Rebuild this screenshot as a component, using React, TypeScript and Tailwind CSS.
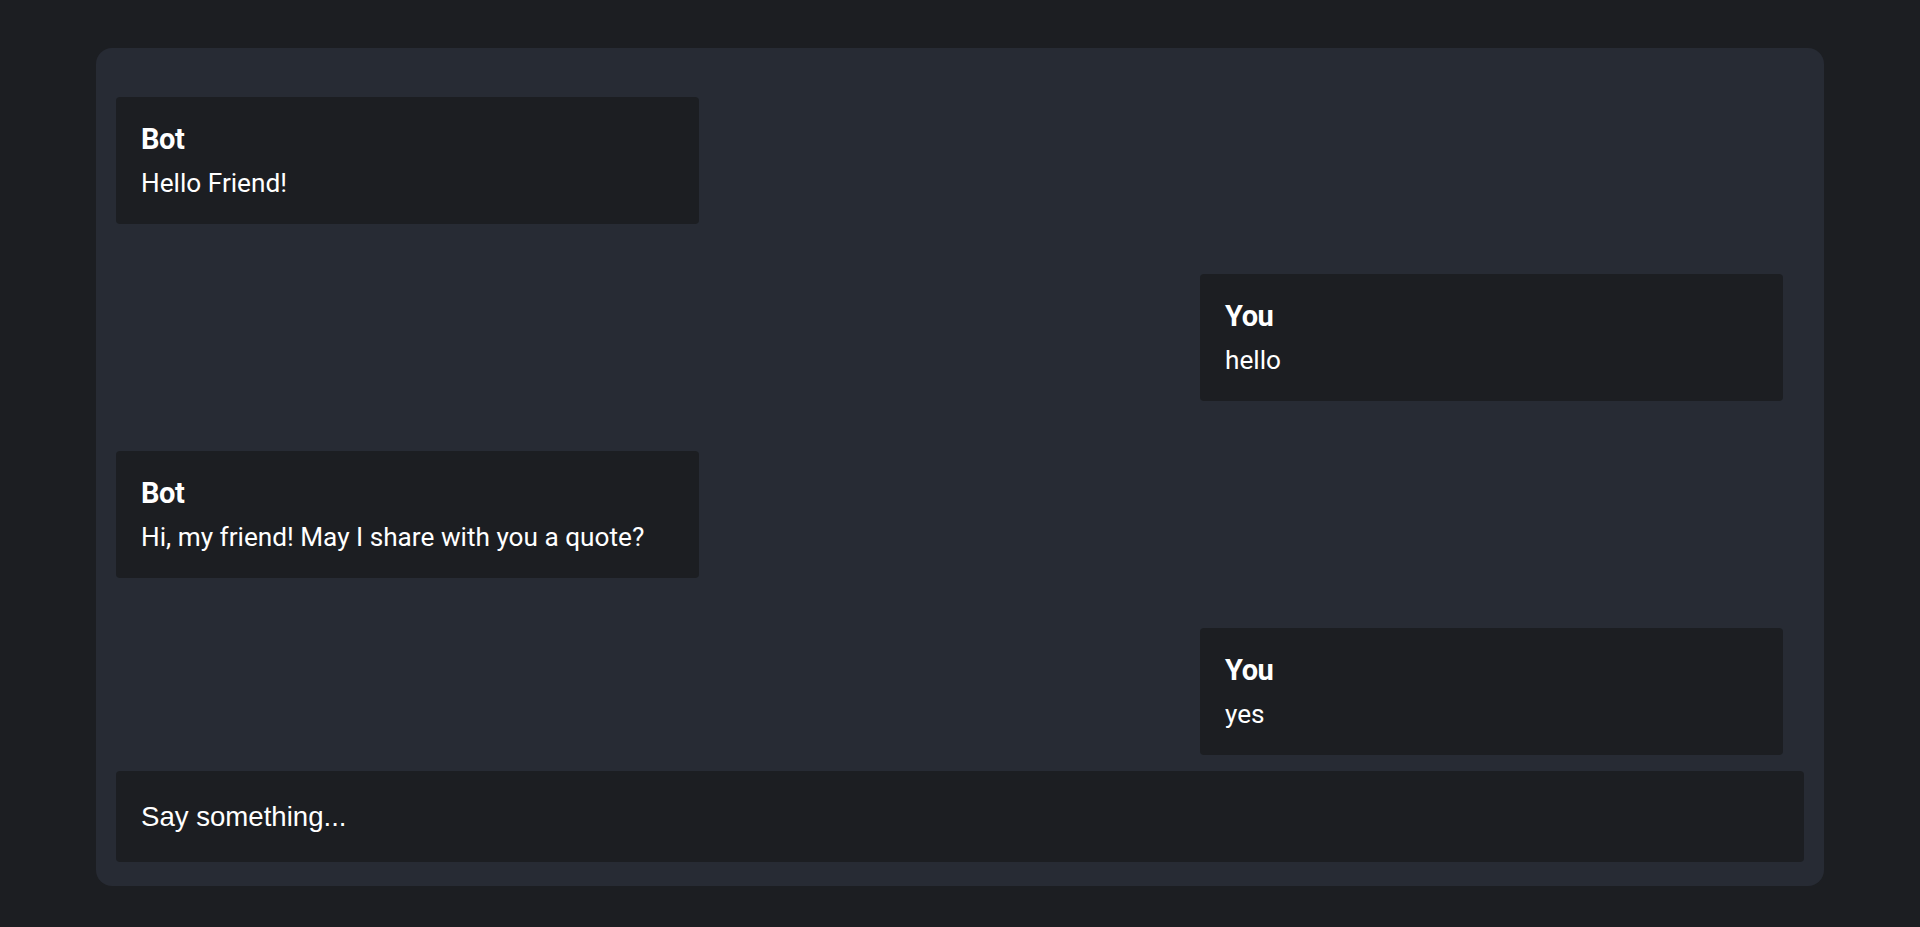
import React from 'react';

interface Message {
  id: number;
  author: 'Bot' | 'You';
  text: string;
}

const messages: Message[] = [
  { id: 1, author: 'Bot', text: 'Hello Friend!' },
  { id: 2, author: 'You', text: 'hello' },
  { id: 3, author: 'Bot', text: 'Hi, my friend! May I share with you a quote?' },
  { id: 4, author: 'You', text: 'yes' },
];

const MessageBubble: React.FC<{ message: Message }> = ({ message }) => {
  const isBot = message.author === 'Bot';
  return (
    <div className={isBot ? 'flex justify-start' : 'flex justify-end'}>
      <div className="w-[583px] h-[127px] rounded bg-[#1c1e22] pl-[25px] pr-6 pt-[26px] text-white">
        <div className="text-[29px] font-bold leading-[33px] tracking-[-0.4px]">
          {message.author}
        </div>
        <p className="mt-[12px] text-[26.2px] leading-[30px]">{message.text}</p>
      </div>
    </div>
  );
};

const App: React.FC = () => {
  return (
    <div
      className="min-h-screen w-full bg-[#1c1e22] pt-[48px]"
      style={{ fontFamily: 'Roboto, "Liberation Sans", sans-serif' }}
    >
      <div className="mx-auto flex h-[838px] w-[1728px] flex-col rounded-2xl bg-[#272b34] px-5 pt-[49px] pb-[24px]">
        <div className="flex flex-1 flex-col gap-[50px] overflow-hidden pr-[21px]">
          {messages.map((message) => (
            <MessageBubble key={message.id} message={message} />
          ))}
        </div>
        <input
          type="text"
          placeholder="Say something..."
          className="mt-[15px] h-[91px] w-full shrink-0 rounded bg-[#1c1e22] pl-[25px] pr-6 text-[27.6px] text-white outline-none placeholder:text-white"
          style={{ fontFamily: '"Liberation Sans", Arial, sans-serif' }}
        />
      </div>
    </div>
  );
};

export default App;
